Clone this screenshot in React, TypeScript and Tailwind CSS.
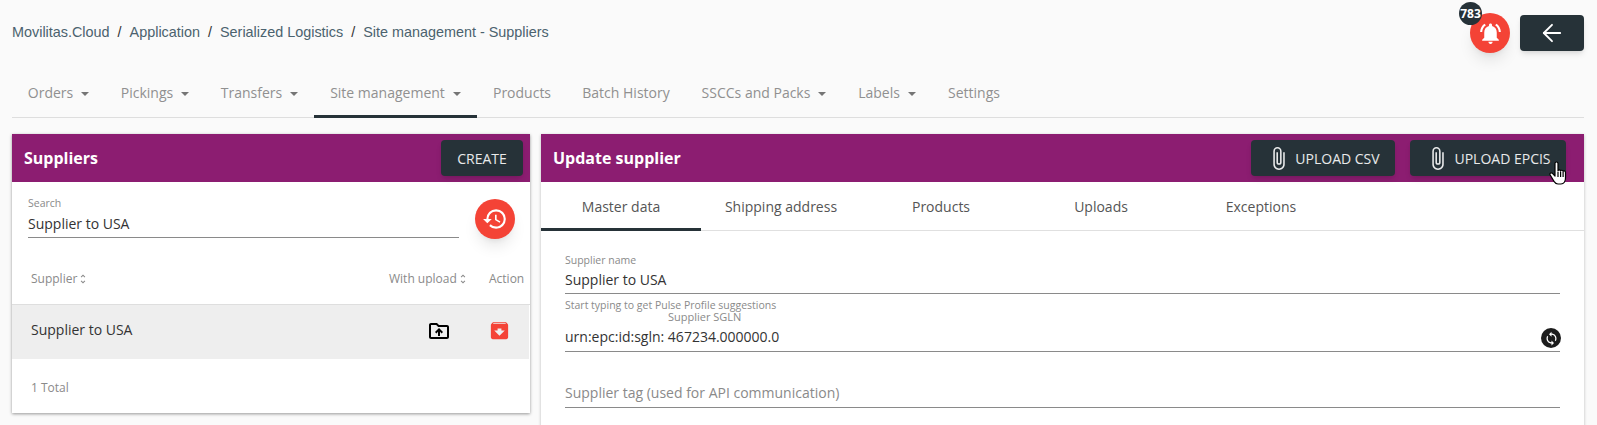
import { ArrowLeft } from "lucide-react";
import {
  MdArchive,
  MdAttachFile,
  MdHistory,
  MdNotificationsActive,
  MdOutlineDriveFolderUpload,
  MdSync,
  MdUnfoldMore,
} from "react-icons/md";

const crumbs = ["Movilitas.Cloud", "Application", "Serialized Logistics", "Site management - Suppliers"];

const navItems = [
  { label: "Orders", caret: true, w: "w-[93px]" },
  { label: "Pickings", caret: true, w: "w-[100px]" },
  { label: "Transfers", caret: true, w: "w-[109px]" },
  { label: "Site management", caret: true, w: "w-[163px]", active: true },
  { label: "Products", w: "w-[90px]" },
  { label: "Batch History", w: "w-[118px]" },
  { label: "SSCCs and Packs", caret: true, w: "w-[158px]" },
  { label: "Labels", caret: true, w: "w-[88px]" },
  { label: "Settings", w: "w-[86px]" },
];

const tabs = ["Master data", "Shipping address", "Products", "Uploads", "Exceptions"];

const DarkButton = ({ label, w }: { label: string; w: string }) => (
  <button
    className={`${w} h-[36px] flex items-center justify-center gap-[4px] rounded bg-[#263238] text-[14px] text-white/90 shadow-md`}
  >
    <MdAttachFile className="text-[25px]" />
    {label}
  </button>
);

const Caret = () => (
  <span className="ml-[8px] inline-block align-middle border-x-[4px] border-t-[4px] border-x-transparent border-t-[#757575]" />
);

export default function App() {
  return (
    <div className="h-[425px] overflow-hidden bg-[#fafafa] pl-[12px] pr-[13px] font-['Open_Sans',sans-serif]">
      {/* TOP */}
      <div className="relative h-[66px] flex items-center justify-between">
        <div className="flex gap-[8px] font-['Liberation_Sans',sans-serif] text-[14.4px] text-[#4b626e]">
          {crumbs.map((c, i) => (
            <span key={c} className="flex gap-[8px]">
              {i > 0 && <span className="text-[#333]">/</span>}
              {c}
            </span>
          ))}
        </div>
        <div className="flex items-center gap-[10px]">
          <div className="relative">
            <div className="w-[40px] h-[40px] rounded-full bg-[#f44336] flex items-center justify-center text-white shadow-lg">
              <MdNotificationsActive className="text-[25px]" />
            </div>
            <span className="absolute -top-[11px] -left-[11px] w-[23px] h-[23px] rounded-full bg-[#263238] text-white text-[12px] font-bold flex items-center justify-center">
              783
            </span>
          </div>
          <button className="w-[64px] h-[36px] rounded bg-[#263238] flex items-center justify-center text-white shadow-md">
            <ArrowLeft size={28} strokeWidth={1.6} />
          </button>
        </div>
      </div>

      {/* NAV */}
      <nav className="flex h-[52px] border-b border-[#dedede] text-[14px] text-[#909090]">
        {navItems.map((n) => (
          <div
            key={n.label}
            className={`${n.w} h-[52px] flex items-center justify-center ${
              n.active ? "border-b-[3px] border-[#263238] pt-[3px]" : ""
            }`}
          >
            <span>
              {n.label}
              {n.caret && <Caret />}
            </span>
          </div>
        ))}
      </nav>

      <div className="flex gap-[11px] mt-[16px] items-start">
        {/* LEFT */}
        <section className="w-[518px] shrink-0 h-[279px] bg-white shadow-[0_1px_3px_rgba(0,0,0,0.4)]">
          <div className="h-[48px] bg-[#8c1d71] flex items-center justify-between pl-[12px] pr-[7px]">
            <h2 className="text-[16px] font-bold text-white">Suppliers</h2>
            <button className="w-[82px] h-[36px] rounded bg-[#263238] text-[14px] text-white/90 shadow-md">
              CREATE
            </button>
          </div>
          <div className="relative h-[44px] ml-[16px] w-[431px] mt-[12px] border-b border-[#8a8a8a]">
            <div className="text-[10.5px] leading-[14px] text-[#8a8a8a] pt-[2px]">Search</div>
            <div className="text-[14px] leading-[20px] mt-[4px] text-[#333]">Supplier to USA</div>
            <button className="absolute left-[447px] top-[5px] w-[40px] h-[40px] rounded-full bg-[#f44336] flex items-center justify-center text-white shadow-lg">
              <MdHistory className="text-[26px]" />
            </button>
          </div>
          <div className="flex h-[67px] items-center border-b border-[#dedede] pl-[19px] pt-[16px] text-[12px] text-[#8a8a8a]">
            <span className="flex-1 flex items-center">
              Supplier <MdUnfoldMore className="text-[12px]" />
            </span>
            <span className="w-[100px] flex items-center">
              With upload <MdUnfoldMore className="text-[12px]" />
            </span>
            <span className="w-[41px]">Action</span>
          </div>
          <div className="flex h-[54px] items-center bg-[#eeeeee] pl-[19px] pb-[5px] mr-px text-[14px] text-[#333]">
            <span className="flex-1">Supplier to USA</span>
            <MdOutlineDriveFolderUpload className="text-[24px] text-black mr-[37px] mt-[2px]" />
            <MdArchive className="text-[23px] text-[#f44336] mr-[18px] mt-[2px]" />
          </div>
          <div className="pl-[19px] pt-[20px] text-[12px] leading-[18px] text-[#8a8a8a]">1 Total</div>
        </section>

        {/* RIGHT */}
        <section className="flex-1 h-[300px] bg-white shadow-[0_1px_3px_rgba(0,0,0,0.25)]">
          <div className="h-[48px] bg-[#8c1d71] flex items-center justify-between pl-[12px] pr-[18px]">
            <h2 className="text-[16px] font-bold text-white">Update supplier</h2>
            <div className="relative flex gap-[15px]">
              <DarkButton label="UPLOAD CSV" w="w-[144px]" />
              <DarkButton label="UPLOAD EPCIS" w="w-[156px]" />
              <svg
                viewBox="0 0 18 24"
                className="absolute -right-[1px] top-[21px] w-[18px] h-[24px]"
                fill="white"
                stroke="black"
                strokeWidth="1.2"
                strokeLinejoin="round"
              >
                <path d="M6 2.5c0-2 3-2 3 0V10c0-1.5 2.6-1.5 2.6.2 0-1.3 2.5-1.3 2.5.4 0-1.1 2.4-1 2.4.8V17c0 3-1.6 6-4.5 6H9c-2 0-3-1-4-2.6L1.2 14c-.9-1.7 1.2-3 2.5-1.4L6 15z" />
                <path d="M9 11v5M11.6 11v5M14.1 11v5" fill="none" />
              </svg>
            </div>
          </div>

          <div className="flex h-[49px] border-b border-[#e0e0e0] text-[14px] text-[#555]">
            {tabs.map((t, i) => (
              <div
                key={t}
                className={`w-[160px] flex items-center justify-center ${
                  i === 0 ? "border-b-[3px] border-[#263238] pt-[3px] h-[49px]" : ""
                }`}
              >
                {t}
              </div>
            ))}
          </div>

          <div className="pl-[24px] pr-[24px]">
            <div className="h-[63px] border-b border-[#8a8a8a] pt-[22px]">
              <div className="text-[10.5px] leading-[14px] text-[#8a8a8a]">Supplier name</div>
              <div className="text-[14px] leading-[20px] mt-[3px] text-[#333]">Supplier to USA</div>
            </div>
            <div className="text-[10.5px] leading-[12px] text-[#8a8a8a] mt-[5px]">
              Start typing to get Pulse Profile suggestions
            </div>
            <div className="relative h-[41px] border-b border-[#8a8a8a]">
              <div className="text-[11px] leading-[12px] text-[#8a8a8a] pl-[103px]">Supplier SGLN</div>
              <div className="text-[14px] leading-[20px] mt-[4px] text-[#333]">urn:epc:id:sgln: 467234.000000.0</div>
              <span className="absolute -right-px top-[17px] w-[20px] h-[20px] rounded-full bg-[#1c1c1c] flex items-center justify-center text-white">
                <MdSync className="text-[15px]" />
              </span>
            </div>
            <div className="h-[56px] border-b border-[#8a8a8a] pt-[31px] text-[14px] leading-[20px] text-[#8a8a8a]">
              Supplier tag (used for API communication)
            </div>
          </div>
        </section>
      </div>
    </div>
  );
}
